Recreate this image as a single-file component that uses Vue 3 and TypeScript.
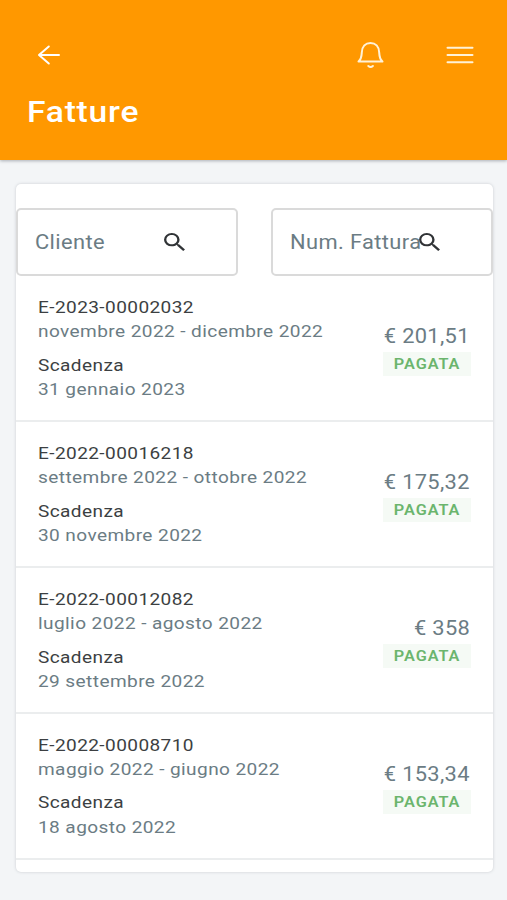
<script setup lang="ts">
interface Invoice {
  code: string
  period: string
  due: string
  amount: string
}

const filters: string[] = ['Cliente', 'Num. Fattura']

const invoices: Invoice[] = [
  { code: 'E-2023-00002032', period: 'novembre 2022 - dicembre 2022', due: '31 gennaio 2023', amount: '€ 201,51' },
  { code: 'E-2022-00016218', period: 'settembre 2022 - ottobre 2022', due: '30 novembre 2022', amount: '€ 175,32' },
  { code: 'E-2022-00012082', period: 'luglio 2022 - agosto 2022', due: '29 settembre 2022', amount: '€ 358' },
  { code: 'E-2022-00008710', period: 'maggio 2022 - giugno 2022', due: '18 agosto 2022', amount: '€ 153,34' },
]
</script>

<template>
  <div class="screen">
    <header class="header">
      <nav class="toolbar">
        <svg class="back" viewBox="0 0 24 22" aria-label="Indietro">
          <path d="M22 11H2M11.800 2.500 2 11l9.800 8.500" />
        </svg>
        <svg class="bell" viewBox="0 0 30 30" aria-label="Notifiche">
          <path d="M2.500 21.500C5.500 19 5.600 16.500 5.800 12.500C6 6.500 9.500 3 14.500 3S23 6.500 23.200 12.500C23.400 16.500 23.500 19 26.500 21.500Z" />
          <path d="M12.300 26Q14.600 28 16.900 26" />
        </svg>
        <svg class="menu" viewBox="0 0 28 20" aria-label="Menu">
          <path d="M1.500 2.700H26.500M1.500 10H26.500M1.500 17.300H26.500" />
        </svg>
      </nav>
      <h1 class="title"><span class="wide">Fatture</span></h1>
    </header>

    <main class="card">
      <div class="filters">
        <div v-for="label in filters" :key="label" class="field">
          <span class="placeholder"><span class="wide">{{ label }}</span></span>
          <svg class="search" viewBox="3 3 17.500 17.500" preserveAspectRatio="none">
            <path d="M15.500 14h-.79l-.28-.27A6.471 6.471 0 0 0 16 9.500 6.500 6.500 0 1 0 9.500 16c1.610 0 3.090-.59 4.230-1.570l.27.280v.79l5 4.990L20.490 19l-4.990-5zm-6 0C7.010 14 5 11.990 5 9.500S7.010 5 9.500 5 14 7.010 14 9.500 11.990 14 9.500 14z" />
          </svg>
        </div>
      </div>

      <section v-for="item in invoices" :key="item.code" class="invoice">
        <div class="details">
          <p class="strong"><span class="wide">{{ item.code }}</span></p>
          <p><span class="wide">{{ item.period }}</span></p>
          <p class="strong due"><span class="wide">Scadenza</span></p>
          <p><span class="wide">{{ item.due }}</span></p>
        </div>
        <div class="summary">
          <p class="amount"><span class="wide">{{ item.amount }}</span></p>
          <p class="badge"><span class="wide">PAGATA</span></p>
        </div>
      </section>
    </main>
  </div>
</template>

<style>
body {
  background: #f3f5f7;
}
</style>

<style scoped>
.screen {
  box-sizing: border-box;
  height: 900px;
  overflow: hidden;
  background: #f3f5f7;
  color: #6b7c84;
  font-family: Roboto, sans-serif;
}

p,
h1 {
  margin: 0;
  font-weight: 400;
}

.wide {
  display: inline-block;
  transform: scaleX(1.12);
  transform-origin: left center;
  white-space: nowrap;
}

.header {
  box-sizing: border-box;
  height: 160px;
  padding: 40px 33px 0 27px;
  background: #ff9800;
  box-shadow: 0 1px 3px rgba(60, 70, 80, 0.4);
  color: #fff;
}

.toolbar {
  display: flex;
  align-items: center;
  height: 30px;
}

.toolbar svg {
  fill: none;
  stroke: #fff2d8;
  stroke-width: 2;
  stroke-linecap: round;
  stroke-linejoin: round;
}

.toolbar .back {
  width: 24px;
  height: 22px;
  margin-left: 10px;
  stroke: #fff;
}

.bell {
  width: 30px;
  height: 30px;
  margin-left: auto;
}

.menu {
  width: 28px;
  height: 20px;
  margin-left: 60px;
}

.title {
  margin-top: 22px;
  font-size: 30px;
  font-weight: 500;
  line-height: 40px;
  letter-spacing: 0.7px;
}

.card {
  box-sizing: border-box;
  width: 477px;
  height: 688px;
  margin: 24px 0 0 16px;
  padding-top: 24px;
  border-radius: 5px;
  background: #fff;
  box-shadow: 0 0 3px rgba(70, 80, 90, 0.25);
}

.filters {
  display: grid;
  grid-template-columns: 222px 222px;
  justify-content: space-between;
}

.field {
  box-sizing: border-box;
  display: flex;
  align-items: center;
  height: 68px;
  padding: 0 51px 0 17px;
  border: 2px solid #dadada;
  border-radius: 5px;
}

.placeholder {
  flex: 1;
  min-width: 0;
  font-size: 19.500px;
  letter-spacing: 0.35px;
}

.search {
  flex: none;
  width: 21px;
  height: 18px;
  fill: #303336;
}

.invoice {
  box-sizing: border-box;
  display: flex;
  justify-content: space-between;
  height: 145.850px;
  padding: 19px 22px 0 22px;
  border-bottom: 2px solid #ebedee;
}

.invoice:last-child {
  height: 146.500px;
}

.details {
  font-size: 17px;
  line-height: 24.200px;
  letter-spacing: 0.37px;
}

.strong {
  color: #3c3f42;
}

.due {
  margin-top: 9.500px;
}

.summary {
  display: flex;
  flex-direction: column;
  align-items: flex-end;
  padding-top: 28px;
}

.summary .wide {
  transform-origin: right center;
}

.amount {
  padding-right: 1px;
  font-size: 19.500px;
  line-height: 28px;
  letter-spacing: 0.3px;
}

.badge {
  box-sizing: border-box;
  width: 88px;
  height: 24px;
  margin-top: 1px;
  padding-right: 11px;
  background: #f5faf5;
  color: #6bb56d;
  font-size: 14.500px;
  font-weight: 600;
  line-height: 25px;
  letter-spacing: 0.85px;
  text-align: right;
}
</style>
